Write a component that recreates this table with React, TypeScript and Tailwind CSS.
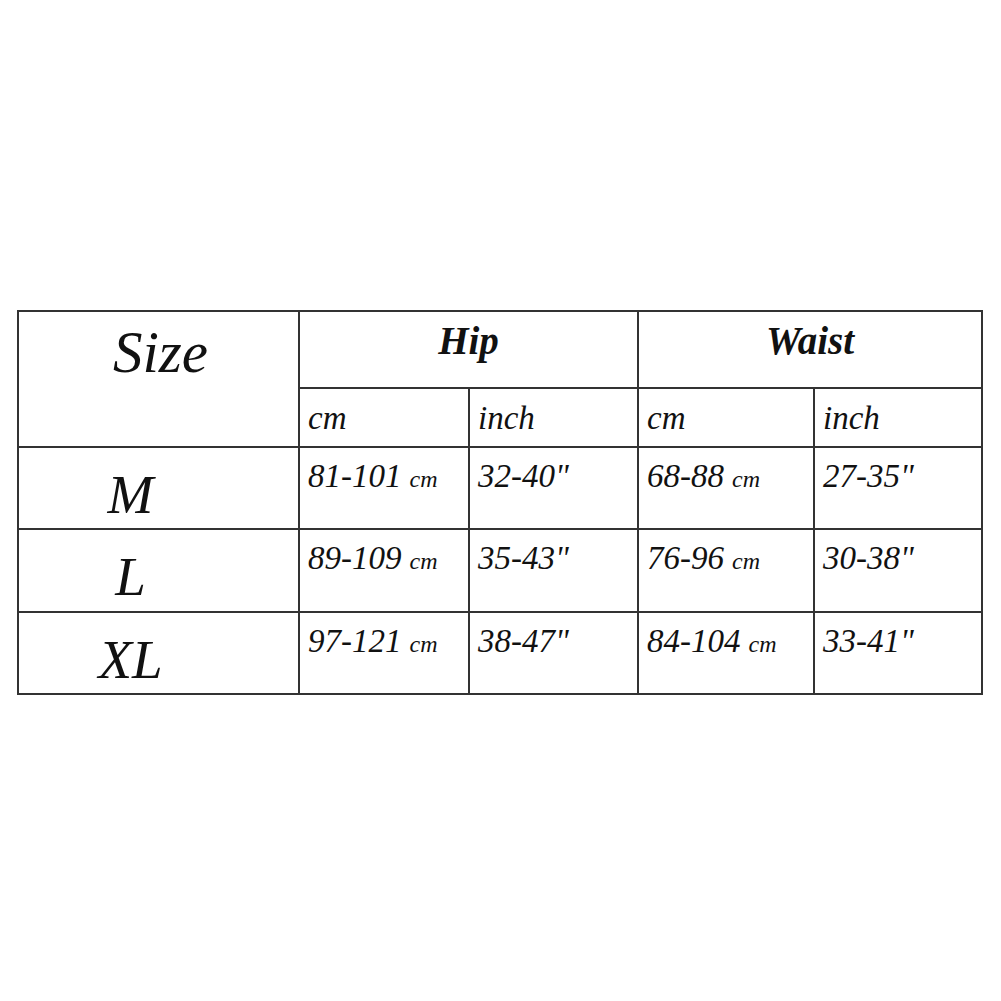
const rows = [
  { size: "M", hipCm: "81-101", hipIn: "32-40\"", waistCm: "68-88", waistIn: "27-35\"" },
  { size: "L", hipCm: "89-109", hipIn: "35-43\"", waistCm: "76-96", waistIn: "30-38\"" },
  { size: "XL", hipCm: "97-121", hipIn: "38-47\"", waistCm: "84-104", waistIn: "33-41\"" },
];

const cell = "border-2 border-[#333] align-top p-0";
const num = "pt-[12px] pl-2 text-[33px] leading-[33px]";

export default function App() {
  return (
    <div
      className="w-[1001px] h-[1001px] bg-white text-[#111] pt-[310px] pl-[17px]"
      style={{ fontFamily: '"Liberation Serif", "Times New Roman", serif' }}
    >
      <table className="table-fixed border-collapse w-[964px] italic">
        <colgroup>
          <col className="w-[281px]" />
          <col className="w-[170px]" />
          <col className="w-[169px]" />
          <col className="w-[176px]" />
          <col className="w-[168px]" />
        </colgroup>
        <tbody>
          <tr className="h-[77px]">
            <td rowSpan={2} className={`${cell} text-center`}>
              <div className="pt-[11px] pl-[4px] text-[59px] leading-[59px]">Size</div>
            </td>
            <td colSpan={2} className={`${cell} text-center`}>
              <div className="pt-[9px] text-[39px] leading-[39px] font-bold">Hip</div>
            </td>
            <td colSpan={2} className={`${cell} text-center`}>
              <div className="pt-[9px] text-[39px] leading-[39px] font-bold">Waist</div>
            </td>
          </tr>
          <tr className="h-[59px]">
            {["cm", "inch", "cm", "inch"].map((u, i) => (
              <td key={i} className={cell}>
                <div className="pt-[13px] pl-2 text-[33px] leading-[32px]">{u}</div>
              </td>
            ))}
          </tr>
          {rows.map((r, i) => (
            <tr key={r.size} className={i === 1 ? "h-[83px]" : "h-[82px]"}>
              <td className={`${cell} text-center`}>
                <div className="pt-[19px] pr-[56px] text-[55px] leading-[55px]">{r.size}</div>
              </td>
              <td className={cell}>
                <div className={num}>
                  {r.hipCm}
                  <span className="ml-[8px] text-[24px]">cm</span>
                </div>
              </td>
              <td className={cell}>
                <div className={num}>{r.hipIn}</div>
              </td>
              <td className={cell}>
                <div className={num}>
                  {r.waistCm}
                  <span className="ml-[8px] text-[24px]">cm</span>
                </div>
              </td>
              <td className={cell}>
                <div className={num}>{r.waistIn}</div>
              </td>
            </tr>
          ))}
        </tbody>
      </table>
    </div>
  );
}
